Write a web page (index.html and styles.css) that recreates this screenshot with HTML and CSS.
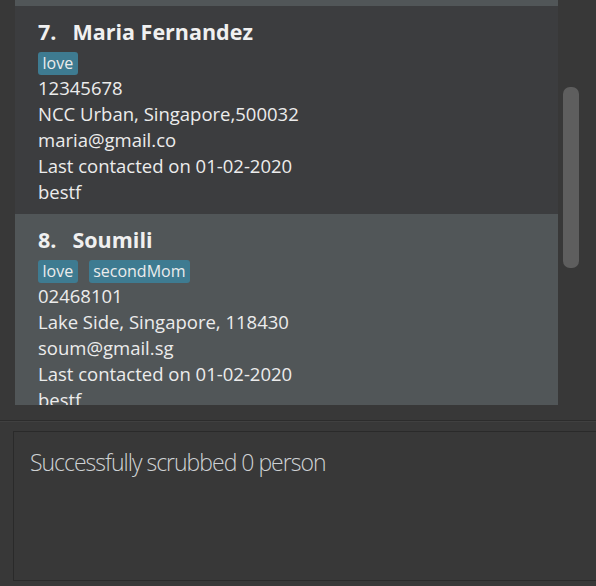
FILE: index.html
```html
<!DOCTYPE html>
<html>
<head>
<meta charset="utf-8">
<link rel="stylesheet" href="styles.css">
</head>
<body>
<div class="app">
  <div class="list-pane">
    <div class="list">
      <div class="card even stub"></div>
      <div class="card odd">
        <div class="title"><span class="idx">7.</span><span class="name">Maria Fernandez</span></div>
        <div class="tags"><span class="tag">love</span></div>
        <div class="line">12345678</div>
        <div class="line">NCC Urban, Singapore,500032</div>
        <div class="line">maria@gmail.co</div>
        <div class="line">Last contacted on 01-02-2020</div>
        <div class="line">bestf</div>
      </div>
      <div class="card even">
        <div class="title"><span class="idx">8.</span><span class="name">Soumili</span></div>
        <div class="tags"><span class="tag">love</span><span class="tag">secondMom</span></div>
        <div class="line">02468101</div>
        <div class="line">Lake Side, Singapore, 118430</div>
        <div class="line">soum@gmail.sg</div>
        <div class="line">Last contacted on 01-02-2020</div>
        <div class="line">bestf</div>
      </div>
    </div>
    <div class="scrollbar"><div class="thumb"></div></div>
  </div>
  <div class="divider"></div>
  <div class="result-wrap">
    <div class="result-box">Successfully scrubbed 0 person</div>
  </div>
</div>
</body>
</html>
```
FILE: styles.css
```css
html, body {
  margin: 0;
  padding: 0;
  background: #383838;
  overflow: hidden;
}
.app {
  width: 596px;
  height: 586px;
  display: flex;
  flex-direction: column;
  font-family: "Open Sans", "Noto Sans", sans-serif;
  color: #ececec;
}
.list-pane {
  display: flex;
  height: 405px;
  padding-left: 15px;
}
.list {
  width: 543px;
  height: 405px;
  overflow: hidden;
  display: flex;
  flex-direction: column;
}
.card {
  flex: none;
  padding: 11px 0 9px 23px;
}
.card.stub {
  height: 6px;
  padding: 0;
}
.odd { background: #3c3d3f; }
.even { background: #515658; }
.title {
  display: flex;
  gap: 16px;
  font-size: 21.5px;
  font-weight: 700;
  line-height: 30px;
  color: #f0f0f0;
}
.tags {
  display: flex;
  gap: 11px;
  margin-top: 5px;
}
.tag {
  background: #3e7b91;
  color: #ececec;
  font-size: 16px;
  line-height: 23px;
  padding: 0 4.5px;
  border-radius: 3px;
}
.line {
  font-size: 18.5px;
  line-height: 26px;
  white-space: nowrap;
}
.scrollbar {
  width: 38px;
  padding-left: 5px;
  box-sizing: border-box;
}
.thumb {
  width: 16px;
  height: 181px;
  margin-top: 87px;
  background: #5e5e5e;
  border-radius: 7px;
}
.divider {
  height: 1px;
  margin-top: 15px;
  background: #2c2c2c;
  border-bottom: 1px solid #404040;
}
.result-wrap {
  padding: 9px 0 0 13px;
}
.result-box {
  width: 600px;
  height: 150px;
  border: 1px solid #2a2a2a;
  box-sizing: border-box;
  padding: 14px 0 0 16px;
  font-size: 23px;
  font-weight: 300;
  letter-spacing: -1px;
  color: #cfd2d4;
}
```
